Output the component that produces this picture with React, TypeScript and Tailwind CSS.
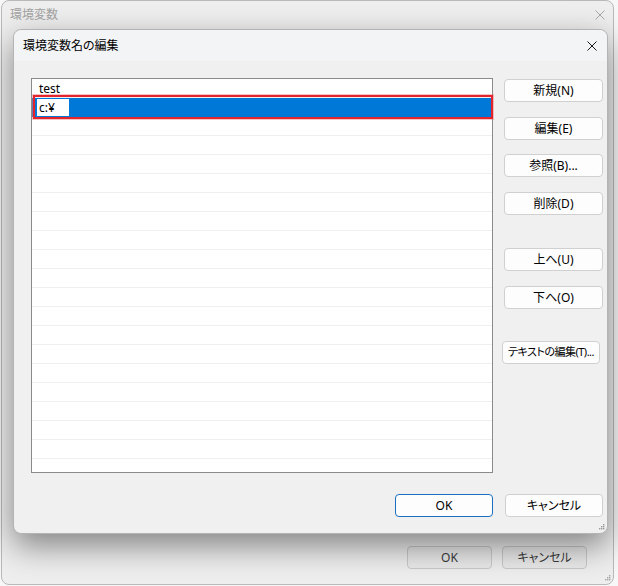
import type { ReactNode } from "react";

const font = {
  fontFamily: '"Noto Sans", "Noto Sans CJK JP", sans-serif',
};

function CloseIcon({ color }: { color: string }) {
  return (
    <svg viewBox="0 0 10 10" className="size-[10px]" fill="none">
      <path d="M0.5 0.5l9 9M9.5 0.5l-9 9" stroke={color} strokeWidth="1" />
    </svg>
  );
}

function Grip({ color }: { color: string }) {
  // six dots stacked in a small triangle
  const dots = [
    [5, 0],
    [3, 2],
    [5, 2],
    [1, 4],
    [3, 4],
    [5, 4],
  ];
  return (
    <svg viewBox="0 0 7 6" className="h-[6px] w-[7px]">
      {dots.map(([x, y]) => (
        <rect key={`${x}-${y}`} x={x} y={y} width="1.4" height="1.4" fill={color} />
      ))}
    </svg>
  );
}

function Button({
  children,
  className = "",
  primary = false,
}: {
  children: ReactNode;
  className?: string;
  primary?: boolean;
}) {
  return (
    <button
      className={`flex h-[23px] items-center justify-center whitespace-nowrap rounded-[4px] border bg-[#fdfdfd] text-black ${
        primary ? "border-[#1a6fc0]" : "border-[#d0d0d0]"
      } ${className}`}
    >
      {children}
    </button>
  );
}

const rows = Array.from({ length: 20 }, (_, i) => i);

export default function App() {
  return (
    <div
      className="h-[586px] w-[618px] bg-[#f7f7f7] [font-feature-settings:'palt']"
      style={font}
    >
      <div className="relative ml-px flex h-[585px] w-[613px] flex-col rounded-[8px] border border-[#b9b9b9] bg-[#eeeeee]">
        {/* parent window title */}
        <div className="flex h-[28px] shrink-0 items-center justify-between pl-[8px] pr-[8px]">
          <span className="text-[12px] text-[#a3a3a3]">環境変数</span>
          <CloseIcon color="#a8a8a8" />
        </div>

        {/* edit dialog */}
        <div className="relative ml-[11px] flex h-[505px] w-[595px] shrink-0 flex-col rounded-[8px] border border-[#b4b4b4] bg-[#f0f0f0] shadow-[0_12px_32px_rgba(0,0,0,0.45)]">
          <div className="flex h-[31px] shrink-0 items-center justify-between rounded-t-[8px] bg-[#f3f4f6] pl-[9px] pr-[10px]">
            <span className="text-[12px] text-black">環境変数名の編集</span>
            <CloseIcon color="#1a1a1a" />
          </div>

          <div className="flex pl-[17px] pt-[17px]">
            <div className="h-[395px] w-[462px] border border-[#8a8a8a] bg-white">
              {rows.map((i) =>
                i === 1 ? (
                  <div key={i} className="relative flex h-[19px] items-center bg-[#0078d7] pl-[5px]">
                    <div className="flex h-[17px] w-[32px] items-center bg-white pl-[2px] pt-px text-[12px] text-black">
                      c:¥
                    </div>
                    <div className="absolute -bottom-[2px] -top-[3px] left-px -right-px border-2 border-[#e3242d] shadow-[0_0_0_1px_rgba(240,120,120,0.45)]" />
                  </div>
                ) : (
                  <div
                    key={i}
                    className="flex h-[19px] items-center border-b border-[#efefef] pl-[7px] pt-[2px] text-[12px] text-black"
                  >
                    {i === 0 ? "test" : ""}
                  </div>
                )
              )}
            </div>

            <div className="ml-[11px] flex w-[99px] flex-col pt-px text-[12px]">
              <Button className="w-[99px]">新規(N)</Button>
              <Button className="mt-[15px] w-[99px]">編集(E)</Button>
              <Button className="mt-[14px] w-[99px]">参照(B)...</Button>
              <Button className="mt-[15px] w-[99px]">削除(D)</Button>
              <Button className="mt-[33px] w-[99px]">上へ(U)</Button>
              <Button className="mt-[15px] w-[99px]">下へ(O)</Button>
              <Button className="-ml-[2px] mt-[32px] w-[98px] text-[11px] tracking-[-0.5px]">
                テキストの編集(T)...
              </Button>
            </div>
          </div>

          <div className="mt-[21px] flex justify-end gap-[12px] pr-[4px] text-[12px]">
            <Button primary className="w-[98px]">
              OK
            </Button>
            <Button className="w-[98px]">キャンセル</Button>
          </div>

          <div className="absolute bottom-[3px] right-[2px]">
            <Grip color="#9a9a9a" />
          </div>
        </div>

        {/* parent window buttons */}
        <div className="mt-[12px] flex justify-end gap-[10px] pr-[26px]">
          <button className="flex h-[23px] w-[85px] items-center justify-center rounded-[4px] border border-[#c9c9c9] bg-[#e9e9e9] text-[12px] text-[#3a3a3a]">
            OK
          </button>
          <button className="flex h-[23px] w-[85px] items-center justify-center rounded-[4px] border border-[#c9c9c9] bg-[#e9e9e9] text-[12px] text-[#3a3a3a]">
            キャンセル
          </button>
        </div>

        <div className="absolute bottom-[3px] right-[2px]">
          <Grip color="#a6a6a6" />
        </div>
      </div>
    </div>
  );
}
